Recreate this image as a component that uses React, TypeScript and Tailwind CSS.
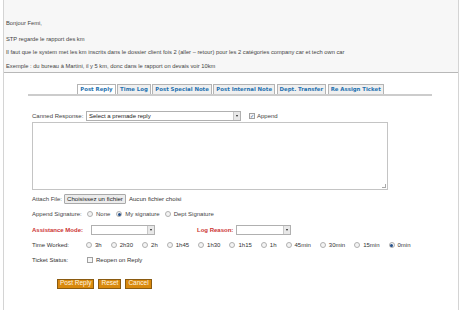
import React from "react";

function Radio({ checked, label, className = "" }: { checked?: boolean; label: string; className?: string }) {
  return (
    <span className={"flex items-center whitespace-nowrap " + className}>
      <span className="w-[6px] h-[6px] rounded-full border border-[#b0b0b0] bg-[#f4f4f4] flex items-center justify-center">
        {checked && <span className="w-[3px] h-[3px] rounded-full bg-[#24508a]" />}
      </span>
      <span className="ml-[3px]">{label}</span>
    </span>
  );
}

function Check({ checked }: { checked?: boolean }) {
  return (
    <span className="w-[6px] h-[6px] border border-[#a0a0a0] bg-[#f6f6f6] flex items-center justify-center text-[5px] leading-none text-[#2a5f9e]">
      {checked ? "✓" : ""}
    </span>
  );
}

function Select({ w, text }: { w: string; text?: string }) {
  return (
    <span className={"h-[10px] border border-[#b0b0b0] bg-white flex items-center justify-between " + w}>
      <span className="pl-[2px] text-[6px] text-[#222] leading-none whitespace-nowrap">{text}</span>
      <span className="w-[7px] h-[8px] border-l border-[#c8c8c8] bg-[#e8e8e8] flex items-center justify-center">
        <span className="w-0 h-0 border-l-[1.5px] border-r-[1.5px] border-t-[2px] border-l-transparent border-r-transparent border-t-[#222]" />
      </span>
    </span>
  );
}

export default function App() {
  const tabs = ["Post Reply", "Time Log", "Post Special Note", "Post Internal Note", "Dept. Transfer", "Re Assign Ticket"];
  const times = ["3h", "2h30", "2h", "1h45", "1h30", "1h15", "1h", "45min", "30min", "15min", "0min"];
  return (
    <div className="w-[460px] h-[310px] bg-white overflow-hidden font-['Liberation_Sans',Arial,sans-serif] text-[#444]">
      <div className="ml-[3px] w-[456px] h-full border-l border-r border-[#d4d4d4]">
        <div className="h-[73px] bg-[#f7f7f7] border-b border-[#b8b8b8] pl-[2px] text-[5.75px] leading-[8px] text-[#444]">
          <p className="pt-[19px]">Bonjour Femi,</p>
          <p className="mt-[8px]">STP regarde le rapport des km</p>
          <p className="mt-[5px]">Il faut que le system met les km inscrits dans le dossier client fois 2 (aller – retour) pour les 2 catégories company car et tech own car</p>
          <p className="mt-[6px]">Exemple : du bureau à Martini, il y 5 km, donc dans le rapport on devais voir 10km</p>
        </div>

        <div className="mt-[11px] ml-[24px] w-[404px] border-b-2 border-[#cccccc] flex justify-center gap-[1.5px] pl-[1px]">
          {tabs.map((t, i) => (
            <span
              key={t}
              className={
                "h-[10px] px-[2px] border border-b-0 border-[#b4b4b4] flex items-center font-['DejaVu_Sans',Verdana,sans-serif] font-bold text-[5.4px] text-[#1f72b0] leading-none whitespace-nowrap " +
                (i === 0 ? "bg-white" : "bg-[#f0f0f0]")
              }
            >
              {t}
            </span>
          ))}
        </div>

        <div className="pl-[28px] text-[6px] leading-none">
          <div className="mt-[15px] h-[10px] flex items-center">
            <span className="w-[54px]">Canned Response:</span>
            <Select w="w-[155px]" text="Select a premade reply" />
            <span className="ml-[8px] flex items-center">
              <Check checked />
              <span className="ml-[2px]">Append</span>
            </span>
          </div>
          <div className="mt-[1px] w-[356px] h-[68px] border border-[#c4c4c4] bg-white relative">
            <span className="absolute right-[1px] bottom-[1px] w-[4px] h-[4px] border-r border-b border-[#aaa]" />
          </div>
          <div className="mt-[4px] h-[10px] flex items-center">
            <span>Attach File:</span>
            <span className="ml-[2px] h-[10px] px-[2px] border border-[#a9a9a9] bg-[#ececec] rounded-[1px] flex items-center text-[6.1px] text-[#222] whitespace-nowrap">
              Choisissez un fichier
            </span>
            <span className="ml-[3px] text-[6.1px] text-[#333]">Aucun fichier choisi</span>
          </div>
          <div className="mt-[5px] h-[10px] flex items-center">
            <span className="w-[55px]">Append Signature:</span>
            <Radio label="None" />
            <Radio checked label="My signature" className="ml-[6px]" />
            <Radio label="Dept Signature" className="ml-[5px]" />
          </div>
          <div className="mt-[6px] h-[10px] flex items-center">
            <span className="w-[59px] font-bold text-[#cc3333] whitespace-nowrap">Assistance Mode:</span>
            <Select w="w-[64px]" />
            <span className="ml-[42px] mr-[3px] font-bold text-[#cc3333] whitespace-nowrap">Log Reason:</span>
            <Select w="w-[55px]" />
          </div>
          <div className="mt-[5px] h-[10px] flex items-center text-[#333]">
            <span className="w-[54px]">Time Worked:</span>
            {times.map((t, i) => (
              <Radio key={t} label={t} checked={i === times.length - 1} className={i === 0 ? "" : "ml-[9px]"} />
            ))}
          </div>
          <div className="mt-[5px] h-[10px] flex items-center text-[#333]">
            <span className="w-[55px]">Ticket Status:</span>
            <Check />
            <span className="ml-[3px]">Reopen on Reply</span>
          </div>
          <div className="mt-[13px] ml-[25px] h-[11px] flex items-center gap-[4px]">
            {["Post Reply", "Reset", "Cancel"].map((b) => (
              <span
                key={b}
                className="h-[10px] px-[2px] bg-[#d9890d] border border-[#8a5a10] flex items-center text-[6.5px] text-[#fff6e0] leading-none"
              >
                {b}
              </span>
            ))}
          </div>
        </div>
      </div>
    </div>
  );
}
